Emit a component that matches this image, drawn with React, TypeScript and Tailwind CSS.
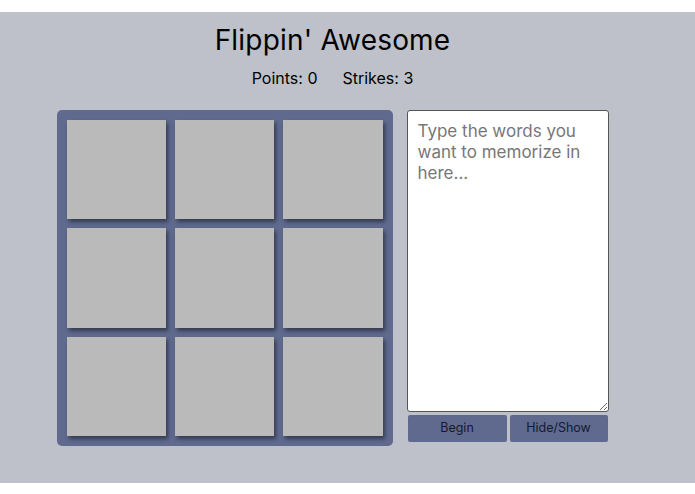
import React from "react";

export default function App() {
  const tiles = Array.from({ length: 9 });
  return (
    <div className="w-[695px] h-[494px] bg-white pt-[12px] overflow-hidden" style={{ fontFamily: "Inter, 'Open Sans', sans-serif" }}>
      <div className="h-[471px] bg-[#bec1c9]">
        <div className="w-[665px] flex flex-col items-center">
          <h1 className="mt-[11px] h-[34px] leading-[34px] text-[28px] text-black font-normal tracking-[0.2px]">Flippin' Awesome</h1>
          <div className="mt-[11px] h-[20px] leading-[20px] text-[16px] text-black flex gap-[25px]">
            <span>Points: 0</span>
            <span>Strikes: 3</span>
          </div>
          <div className="mt-[22px] flex gap-[14px] items-start">
            <div className="w-[336px] h-[336px] bg-[#5f6a8e] rounded-[5px] p-[10px] grid grid-cols-3 grid-rows-3 gap-[9px]">
              {tiles.map((_, i) => (
                <div key={i} className="bg-[#bababa] shadow-[2px_3px_4px_rgba(0,0,0,0.45)]" />
              ))}
            </div>
            <div className="flex flex-col w-[202px]">
              <textarea
                className="w-[202px] h-[302px] bg-white border border-[#555] rounded-[3px] px-[10px] py-[10px] text-[17px] leading-[21px] text-black placeholder:text-[#777] resize-y outline-none"
                placeholder="Type the words you want to memorize in here..."
                style={{ fontFamily: "Inter, 'Open Sans', sans-serif" }}
              />
              <div className="mt-[3px] flex gap-[3px] pl-[1px]">
                <button className="w-[99px] h-[27px] bg-[#5f6a8e] rounded-[2px] text-[12.5px] text-[#151a2e]">Begin</button>
                <button className="w-[98px] h-[27px] bg-[#5f6a8e] rounded-[2px] text-[12.5px] text-[#151a2e]">Hide/Show</button>
              </div>
            </div>
          </div>
        </div>
      </div>
    </div>
  );
}
